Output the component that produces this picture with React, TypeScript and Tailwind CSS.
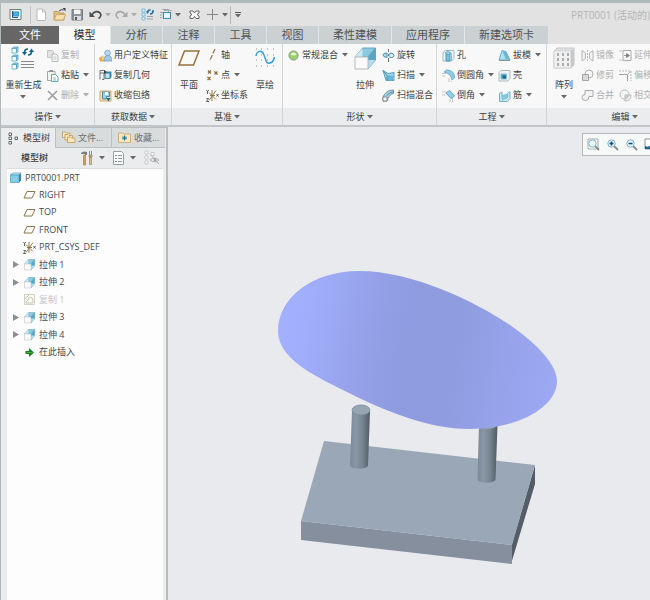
import React, { useState } from "react";

type IconProps = { children: React.ReactNode; w?: number; h?: number };

const Icon = ({ children, w = 13, h = 13 }: IconProps) => (
  <svg width={w} height={h} viewBox={`0 0 ${w} ${h}`} className="shrink-0" fill="none" aria-hidden="true">
    {children}
  </svg>
);

const Caret = ({ faded = false }: { faded?: boolean }) => (
  <svg width="6" height="4" viewBox="0 0 6 4" className="shrink-0" aria-hidden="true">
    <path d="M0 0h6L3 3.5z" fill={faded ? "#aaadaf" : "#66696b"} />
  </svg>
);

// ---- quick access icons ----

const AppIcon = () => (
  <Icon>
    <path d="M1 1.500h11v10H1z" fill="#f3f5f6" stroke="#717c82" />
    <path d="M4 3.500h6v5H4z" fill="#2b95cf" />
    <path d="M5 4.500h4v3H5z" fill="#4fb0e2" />
    <path d="M3.500 3v6.500H9" stroke="#2d586e" />
  </Icon>
);

const NewIcon = () => (
  <Icon>
    <path d="M2 1h5.500l3 3v8.500H2z" fill="#fff" stroke="#b6babc" />
    <path d="M7.500 1v3h3" stroke="#b6babc" />
  </Icon>
);

const OpenIcon = () => (
  <Icon>
    <path d="M1 3.500h4l1 1.500h5v7H1z" fill="#e3bd80" stroke="#c39a5f" />
    <path d="M3.500 6.500h9L10.500 12H1z" fill="#f8dfad" stroke="#cba869" />
    <path d="M6 3q2-2 4.500-1" stroke="#3c4347" />
    <path d="M9.500 0h3v3.500z" fill="#3c4347" />
  </Icon>
);

const SaveIcon = () => (
  <Icon>
    <path d="M1 1.500h10.500v10.500H1z" fill="#8d959a" stroke="#757c81" />
    <path d="M3 1.500h6.500v4.500H3z" fill="#f2f4f5" />
    <path d="M3 8h7v4H3z" fill="#d8dcdf" />
    <path d="M4 9h2v3H4z" fill="#575e63" />
  </Icon>
);

const UndoIcon = () => (
  <Icon>
    <path d="M3 7C4 4 8 2.500 10.500 4.500s1 5-1 6" stroke="#4a4f52" strokeWidth="1.700" />
    <path d="M.5 3.500V9H6z" fill="#4a4f52" />
  </Icon>
);

const RedoIcon = () => (
  <Icon>
    <path d="M10 7C9 4 5 2.500 2.500 4.500s-1 5 1 6" stroke="#a6a9ab" strokeWidth="1.700" />
    <path d="M12.500 3.500V9H7z" fill="#a6a9ab" />
  </Icon>
);

const SmallRegenIcon = () => (
  <Icon>
    <path d="M1 1h3v3H1zM1 5h3v3H1zM1 9h3v3H1z" fill="#d9eff8" stroke="#6db3cf" strokeWidth=".8" />
    <path d="M6.500 4.500Q7 1.500 9.500 2M12 3q0 3-3 3" stroke="#1b6f9c" strokeWidth="1.400" />
    <path d="M5 3.500h3L6.500 6zM10.500 4h3L12 1.500z" fill="#1b6f9c" />
    <path d="M6 8.500h6M6 11h6" stroke="#9ca1a4" />
  </Icon>
);

const WindowsIcon = () => (
  <Icon>
    <path d="M3.500 1.500h6v3M1 4.500h5M1 7h2M1 9.500h2" stroke="#9ca1a4" />
    <path d="M4.500 4.500h7v6h-7z" fill="#eaf6fb" stroke="#3f8fb4" strokeWidth="1.200" />
    <path d="M5 2.500h8" stroke="#aab0b3" />
  </Icon>
);

const CloseIcon = () => (
  <Icon>
    <path
      d="M2 3h3l1.500 2L8 3h3v2L9 6.500 11 8v2.500H8L6.500 8.500 5 10.500H2V8l2-1.500L2 5z"
      fill="#f7f7f7"
      stroke="#63686b"
    />
  </Icon>
);

const PlusIcon = () => (
  <Icon>
    <path d="M6.500 1v11M1 6.500h11" stroke="#84898c" />
  </Icon>
);

// ---- ribbon icons ----

const RegenIcon = () => (
  <Icon w={24} h={26}>
    {[2, 10, 18].map((y) => (
      <g key={y} stroke="#5ba6c4" strokeWidth=".8">
        <path d={`M1 ${y + 1.5}h4.500v4.500h-4.500z`} fill="#f6fcfe" />
        <path d={`M1 ${y + 1.5}l1.500-1.500h4.500l-1.500 1.500zM5.500 ${y + 1.5}L7 ${y}v4.500l-1.500 1.500z`} fill="#8fcbe2" />
      </g>
    ))}
    <path d="M13.500 7.500Q13.500 4 17 4M20.500 6.500Q20.500 10 17 10" stroke="#176389" strokeWidth="1.700" />
    <path d="M11 7h5l-2.500 3.500zM18 7h5l-2.500-3.500z" fill="#176389" />
    <path d="M10 16.500h13M10 19.500h13M10 22.500h13" stroke="#85898c" />
  </Icon>
);

const CopyIcon = () => (
  <Icon>
    <path d="M1.500 1.500h5l1 1v6h-6z" fill="#e4e4e4" stroke="#c3c5c6" />
    <path d="M6 5h4l2 2v5.500H6z" fill="#f7f7f7" stroke="#b7b9ba" />
    <path d="M7.500 8h3M7.500 10h3" stroke="#c4c6c7" />
  </Icon>
);

const PasteIcon = () => (
  <Icon>
    <path d="M1.500 2.500h7.500v9H1.500z" fill="#f1f3f4" stroke="#a0a5a8" />
    <path d="M3.500 1h3.500v2H3.500z" fill="#8b9194" />
    <path d="M5.500 5.500h4l2.500 2.500v4.500H5.500z" fill="#fff" stroke="#6ca5bd" />
    <path d="M7 9h3M7 11h3" stroke="#8ab4c6" />
  </Icon>
);

const DeleteIcon = () => (
  <Icon>
    <path d="M2 2l9 9M11 2l-9 9" stroke="#9a9c9e" strokeWidth="1.500" />
  </Icon>
);

const UserFeatureIcon = () => (
  <Icon>
    <path d="M0 9l3-2 3 2v3.500H1z" fill="#e9a94c" />
    <path d="M3 6l4 2v4l-4-1.500z" fill="#f6d291" />
    <path d="M5 12q0-5.500 4-5.500t4 5.500z" fill="#a5cbea" stroke="#6896bb" strokeWidth=".7" />
    <circle cx="8.500" cy="4" r="2.800" fill="#b8d7ee" stroke="#6896bb" strokeWidth=".7" />
  </Icon>
);

const CopyGeomIcon = () => (
  <Icon>
    <path d="M1 1.500h5M1 1.500v9M1 4h4v6.500H3" stroke="#6f7679" />
    <path d="M6 4l1.500-1.500h5V8L11 9.500H6z" fill="#3590b7" />
    <path d="M6 4h5v5.500H6z" fill="#bfe3f1" stroke="#2c6c8b" strokeWidth=".8" />
    <path d="M5 1l3 2-3 2z" fill="#383d3f" />
  </Icon>
);

const ShrinkIcon = () => (
  <Icon>
    <path d="M1 2h11v10H1z" fill="#f6e5b9" stroke="#cfab62" />
    <path d="M3.500 3v7h4V7.500h3V3z" fill="#9cd2ea" stroke="#3f8fb4" />
    <path d="M6 3v3h3V3z" fill="#fff" />
    <path d="M7.500 9h4l-2 3.500z" fill="#1e6487" />
  </Icon>
);

const PlaneIcon = () => (
  <Icon w={24} h={26}>
    <path d="M7.500 6h14.500l-5.500 14H2z" fill="#fbf9f5" stroke="#93743f" strokeWidth="1.500" />
  </Icon>
);

const AxisIcon = () => (
  <Icon>
    <path d="M9 0L3.500 12" stroke="#9b7a45" strokeWidth="1.300" strokeDasharray="5 1.500" />
  </Icon>
);

const PointIcon = () => (
  <Icon>
    <path d="M2 1.500l3 3M5 1.500l-3 3M8.500 2.500l3 3M11.500 2.500l-3 3M1.500 8l3 3M4.500 8l-3 3" stroke="#8a6b35" strokeWidth="1.200" />
  </Icon>
);

const CsysIcon = () => (
  <Icon>
    <path d="M6 1v11M3 3.500l7 7M10 1.500l-7 10M4 6.500h5" stroke="#8c6c36" strokeWidth=".9" />
    <path d="M.5 1l1 1.500L3 1M1.500 2.500V5M.5 9.500h2L.5 12.500h2.500M10.500 5l2 2.500M12.500 5l-2 2.500" stroke="#393b3d" strokeWidth=".8" />
  </Icon>
);

const SketchIcon = () => (
  <Icon w={24} h={26}>
    {[4, 10, 15, 21].map((y) => (
      <path key={y} d={`M3 ${y}h1M8 ${y}h1M14 ${y}h1M20 ${y}h1`} stroke="#85898c" />
    ))}
    <path d="M3 11C4 5 9 5 11 10s2 9 6 8 3.500-3 4.500-6" stroke="#34a0d8" strokeWidth="1.500" />
  </Icon>
);

const BlendIcon = () => (
  <Icon>
    <circle cx="6.500" cy="6.500" r="4.600" fill="#9bcf74" stroke="#87a572" />
    <path d="M3.500 5.500q3-4 6 0-3 2-6 0z" fill="#e5f7d6" />
  </Icon>
);

const ExtrudeIcon = ({ size = 24 }: { size?: number }) => (
  <svg width={size} height={size === 24 ? 26 : size} viewBox="0 0 24 26" className="shrink-0" fill="none" aria-hidden="true">
    <path d="M2 12L9.500 3h13L15 12z" fill="#8dc9df" stroke="#62a7c1" />
    <path d="M2 12L9.500 3v9z" fill="#c9e9f4" />
    <path d="M15 12l7.500-9v12L15 24z" fill="#57a5c5" stroke="#62a7c1" />
    <path d="M15 24l7.500-9H15z" fill="#b5dcea" />
    <path d="M2 12h13v12H2z" fill="#fafafa" stroke="#b4b8ba" />
  </svg>
);

const RevolveIcon = () => (
  <Icon>
    <path d="M6.500 0v3M6.500 5v2M6.500 9v4" stroke="#6b7275" />
    <path d="M5 4Q1 4 1 6t4 2.500zM8 4q4 0 4 2.500T8 8.500z" fill="#b3dceb" stroke="#4890ae" />
    <circle cx="9.500" cy="6.500" r="1.500" fill="#e7f6fb" />
  </Icon>
);

const SweepIcon = () => (
  <Icon>
    <path d="M1 1.500l5 3 6-1v8H4z" fill="#a3d5e8" stroke="#5aa2bd" />
    <path d="M5 6.500h6v5H5z" fill="#69b7d4" />
    <path d="M1 1.500l4 5v5" stroke="#4c90ac" />
  </Icon>
);

const SweepBlendIcon = () => (
  <Icon>
    <path d="M1 8Q4 1 11.500 1v3.500Q7 5 5 12H1z" fill="#a9d6e7" stroke="#70909c" />
    <path d="M1 8h4v4H1z" fill="#f5f8f9" stroke="#808e94" />
    <path d="M4.500 7Q7 3 11 3" stroke="#4b8ea9" />
  </Icon>
);

const HoleIcon = () => (
  <Icon>
    <path d="M1 3.500L3.500 1.500H12v8l-2.500 2.500H1z" fill="#edf6fa" stroke="#9abccb" />
    <path d="M4 4.500h4V12H4z" fill="#7cc1db" stroke="#479ab9" />
    <ellipse cx="6" cy="4" rx="2.500" ry="1.200" fill="#d3eef8" stroke="#479ab9" />
    <path d="M9.500 4v8" stroke="#a3b6be" />
  </Icon>
);

const RoundIcon = () => (
  <Icon>
    <path d="M2 3l2.500-2q8 0 8 8L10 11Q9 4.500 2 3z" fill="#93cde3" stroke="#6eafc9" />
    <path d="M0 4.500h4M0 7h3M7 9v4M9.500 12v1" stroke="#c1c6c8" />
  </Icon>
);

const ChamferIcon = () => (
  <Icon>
    <path d="M4 4L7.500 1.500l5 5.500L9 9.500z" fill="#93cfe6" stroke="#5faac7" />
    <path d="M0 3h4M0 6h3M8 10v3M10.500 9v4" stroke="#c1c6c8" />
  </Icon>
);

const DraftIcon = () => (
  <Icon>
    <path d="M1 11L4 1.500l4 1 4 8.500z" fill="#ace0f1" stroke="#6bb0ca" />
    <path d="M4.500 2L8 10.500h3.500L8 3z" fill="#6ab6d3" />
    <path d="M1 11.500h11" stroke="#8a959b" />
  </Icon>
);

const ShellIcon = () => (
  <Icon>
    <path d="M1 3.500L3 1.500h9v8l-2 2.500H1z" fill="#edf2f4" stroke="#b0babe" />
    <path d="M3 5h5.500v5H3z" fill="#3e9dc2" stroke="#84bdd3" />
    <path d="M5 6.500h3V9.500H5z" fill="#1c6b8d" />
  </Icon>
);

const RibIcon = () => (
  <Icon>
    <path d="M1.500 4.500v8h8l2.500-3v-7l-2.500 2v4L4 10V3z" fill="#c4e7f3" stroke="#76b1c8" />
    <path d="M4 6l5.500-1.500v4L4 12z" fill="#83c6de" />
  </Icon>
);

const PatternIcon = () => (
  <Icon w={24} h={26}>
    <path d="M2 6l3-3h17v17l-3 3H2z" fill="#dedfe0" stroke="#c8cacb" />
    <path d="M2 6h17v17H2z" fill="#f0f0f0" stroke="#d2d4d5" />
    <path d="M19 6l3-3v17l-3 3z" fill="#c6c8c9" />
    {[8, 13, 18].map((y) => (
      <path key={y} d={`M5 ${y}h2v3H5zM10 ${y}h2v3h-2zM15 ${y}h2v3h-2z`} fill="#abaeb0" />
    ))}
  </Icon>
);

const MirrorIcon = () => (
  <Icon>
    <path d="M1 1.500l3.500 2.500v5.500L1 12zM12 1.500L8.500 4v5.500L12 12z" fill="#f2f2f2" stroke="#b5b8b9" />
    <path d="M6.500 1v11" stroke="#b5b8b9" strokeDasharray="2 1" />
  </Icon>
);

const TrimIcon = () => (
  <Icon>
    <circle cx="8" cy="5" r="4" stroke="#a9acae" />
    <path d="M1.500 5.500h6v6h-6z" fill="#d9dadb" stroke="#a0a3a5" />
  </Icon>
);

const MergeIcon = () => (
  <Icon>
    <path d="M4 5.500V1.500h8v6H8q0 4-3.500 4T1 8.500t3-3z" fill="#f2f2f2" stroke="#a9acae" />
  </Icon>
);

const ExtendIcon = () => (
  <Icon>
    <path d="M4 1.500h8v10H4z" fill="#f6f6f6" stroke="#a9acae" />
    <path d="M0 2h3M0 11h3" stroke="#c1c3c4" />
    <path d="M5 6.500h3M7.500 4.500v4l3-2z" stroke="#7b7e80" fill="#7b7e80" strokeWidth=".8" />
  </Icon>
);

const OffsetIcon = () => (
  <Icon>
    <path d="M0 2h12v10" stroke="#b9bbbc" strokeDasharray="2 1" />
    <path d="M0 5.500h8.500V12" stroke="#9b9ea0" />
    <path d="M8.500 5.500L11.500 2.500" stroke="#aaa" />
  </Icon>
);

const IntersectIcon = () => (
  <Icon>
    <circle cx="5.500" cy="5.500" r="4.500" stroke="#b5b8b9" />
    <path d="M6 12V6h6q0 6-6 6z" stroke="#b5b8b9" fill="#f2f2f2" />
    <path d="M6 10V6h4q0 4-4 4z" fill="#c3c5c6" />
  </Icon>
);

// ---- navigator icons ----

const TreeTabIcon = () => (
  <Icon>
    <path d="M1 1h2.500v2.500H1zM1 5h2.500v2.500H1zM1 9.500h2.500V12H1zM7 5h2.500v2.500H7z" fill="#fff" stroke="#55595b" strokeWidth=".9" />
  </Icon>
);

const FoldersIcon = () => (
  <Icon w={14}>
    {[0, 2.5, 5].map((d) => (
      <path key={d} d={`M${d + 0.5} ${d + 1}h3l1 1h3.500v4.500h-7.500z`} fill="#fae7bd" stroke="#c09f62" strokeWidth=".9" />
    ))}
  </Icon>
);

const FavoriteIcon = () => (
  <Icon>
    <path d="M.5 2h4l1 1h7v8.500H.5z" fill="#fae7bd" stroke="#cfb079" />
    <path d="M6.500 4.500v5M4 7h5M5 5.500l3 3M8 5.500l-3 3" stroke="#1c7198" />
  </Icon>
);

const ToolsIcon = () => (
  <Icon w={14} h={16}>
    <path d="M1 3q2-2.500 6-1v3H5V4H1z" fill="#777d81" />
    <path d="M3.500 5h2v10h-2z" fill="#c99a52" stroke="#a1804f" strokeWidth=".6" />
    <path d="M9.500 1v4M11.500 1v4" stroke="#8a9195" />
    <path d="M9 5h3v2H9zM9.500 7h2v7.500h-2z" fill="#d2bd98" stroke="#8b7859" strokeWidth=".6" />
  </Icon>
);

const ListIcon = () => (
  <Icon h={16}>
    <path d="M1.500 1.500h8l2 2v11h-10z" fill="#fff" stroke="#999ea1" />
    <path d="M3 5.500h2M3 8.500h2M3 11.500h2M6 5.500h4M6 8.500h4M6 11.500h4" stroke="#8494a3" />
  </Icon>
);

const FilterIcon = () => (
  <Icon w={16} h={16}>
    <path d="M1 1h3v3H1zM1 6h3v3H1zM1 11h3v3H1zM7 2.500h3v3H7z" fill="#fafafa" stroke="#c8cbcc" />
    <path d="M6 10q4-4 9 0-4 4-9 0zM7 5l8 9" stroke="#b0b3b5" />
    <circle cx="11" cy="10" r="1.500" fill="#a1a4a6" />
  </Icon>
);

const PartIcon = () => (
  <Icon>
    <path d="M1.500 4L4 2h8l-2 2z" fill="#d9f2fb" stroke="#5a9dba" strokeWidth=".8" />
    <path d="M1.500 4h8.500v7.500H1.500z" fill="#86cde8" stroke="#4fa3c5" strokeWidth=".8" />
    <path d="M10 4l2-2v7.500l-2 2z" fill="#3287ab" />
  </Icon>
);

const DatumIcon = () => (
  <Icon>
    <path d="M4 3.500h8L9 10H1z" fill="#fffdf9" stroke="#8b764f" />
  </Icon>
);

const CopiedIcon = () => (
  <Icon>
    <path d="M1.500 1.500h10v10h-10z" stroke="#d3d0c3" fill="#fbfbf8" />
    <path d="M3 10q0-2 2-2.500 0-3 2.500-3t2.500 3V10zM2 6l4-4" stroke="#c4c1b3" />
  </Icon>
);

const InsertIcon = () => (
  <Icon>
    <path d="M2.500 5H6V2l5 4.500-5 4.500V8H2.500z" fill="#168021" />
    <path d="M3.500 6.500h6" stroke="#48b13d" />
  </Icon>
);

const ZoomIcon = ({ kind }: { kind: "fit" | "in" | "out" }) => (
  <Icon>
    {kind === "fit" && <path d="M1 1h10v10H1z" fill="#fff" stroke="#a5aaad" />}
    <path d="M8 8l4 4" stroke="#85898c" strokeWidth="1.800" />
    <circle cx="5.500" cy="5.500" r="3.700" fill="#e9f6fb" stroke="#83b3c8" />
    {kind === "in" && <path d="M3.500 5.500h4M5.500 3.500v4" stroke="#0f5377" strokeWidth="1.600" />}
    {kind === "out" && <path d="M3.500 5.500h4" stroke="#0f5377" strokeWidth="1.600" />}
  </Icon>
);

// ---- ribbon building blocks ----

type CommandProps = { icon: React.ReactNode; label: string; caret?: boolean; disabled?: boolean };

const Command = ({ icon, label, caret, disabled }: CommandProps) => (
  <button
    type="button"
    disabled={disabled}
    className="flex h-5 items-center gap-[2px] whitespace-nowrap text-[#3c3f41] disabled:text-[#adafb1]"
  >
    {icon}
    <span>{label}</span>
    {caret && (
      <span className="pl-[2px]">
        <Caret faded={disabled} />
      </span>
    )}
  </button>
);

const BigCommand = ({ icon, label, caret }: CommandProps) => (
  <button type="button" className="flex flex-col items-center whitespace-nowrap text-[#3c3f41]">
    {icon}
    <span className="flex h-6 items-center pt-[3px]">{label}</span>
    {caret && <Caret />}
  </button>
);

const Column = ({ children }: { children: React.ReactNode }) => (
  <div className="flex flex-col items-start">{children}</div>
);

const Group = ({ title, width, children }: { title: string; width: string; children: React.ReactNode }) => (
  <section className={`flex shrink-0 flex-col border-r border-[#d3d6d8] ${width}`}>
    <div className="flex h-16 pt-px">{children}</div>
    <button type="button" className="flex h-[17px] items-center justify-center gap-[2px] bg-[#eaecee] text-[#3c3f41]">
      {title}
      <Caret />
    </button>
  </section>
);

const tabs = [
  { label: "模型", width: "w-[52px]" },
  { label: "分析", width: "w-[52px]" },
  { label: "注释", width: "w-[52px]" },
  { label: "工具", width: "w-[52px]" },
  { label: "视图", width: "w-[52px]" },
  { label: "柔性建模", width: "w-[73px]" },
  { label: "应用程序", width: "w-[73px]" },
  { label: "新建选项卡", width: "w-[84px]" },
];

const treeItems = [
  { label: "RIGHT", icon: <DatumIcon /> },
  { label: "TOP", icon: <DatumIcon /> },
  { label: "FRONT", icon: <DatumIcon /> },
  { label: "PRT_CSYS_DEF", icon: <CsysIcon /> },
  { label: "拉伸 1", icon: <ExtrudeIcon size={13} />, expandable: true },
  { label: "拉伸 2", icon: <ExtrudeIcon size={13} />, expandable: true },
  { label: "复制 1", icon: <CopiedIcon />, faded: true },
  { label: "拉伸 3", icon: <ExtrudeIcon size={13} />, expandable: true },
  { label: "拉伸 4", icon: <ExtrudeIcon size={13} />, expandable: true },
  { label: "在此插入", icon: <InsertIcon /> },
];

const QuickButton = ({ label, children }: { label: string; children: React.ReactNode }) => (
  <button type="button" aria-label={label} className="flex w-[18px] justify-center">
    {children}
  </button>
);

const QuickCaret = ({ faded }: { faded?: boolean }) => (
  <button type="button" aria-label="更多" className="flex w-2 justify-center">
    <Caret faded={faded} />
  </button>
);

function QuickAccess() {
  return (
    <header className="flex h-[23px] shrink-0 items-center overflow-hidden bg-[#e2e2e2]">
      <button type="button" aria-label="应用程序菜单" className="flex w-[29px] shrink-0 justify-center">
        <AppIcon />
      </button>
      <span className="mr-px h-[18px] w-px bg-[#c3c5c6]" />
      <QuickButton label="新建"><NewIcon /></QuickButton>
      <QuickButton label="打开"><OpenIcon /></QuickButton>
      <QuickButton label="保存"><SaveIcon /></QuickButton>
      <QuickButton label="撤消"><UndoIcon /></QuickButton>
      <QuickCaret faded />
      <QuickButton label="重做"><RedoIcon /></QuickButton>
      <QuickCaret faded />
      <QuickButton label="重新生成"><SmallRegenIcon /></QuickButton>
      <QuickButton label="窗口"><WindowsIcon /></QuickButton>
      <QuickCaret />
      <span className="w-[3px]" />
      <QuickButton label="关闭"><CloseIcon /></QuickButton>
      <QuickButton label="添加"><PlusIcon /></QuickButton>
      <QuickCaret />
      <span className="mx-px h-[18px] w-px bg-[#b5b8b9]" />
      <button type="button" aria-label="自定义" className="flex w-3 flex-col items-center gap-px">
        <span className="h-px w-[6px] bg-[#55585a]" />
        <Caret />
      </button>
      <h1 className="ml-auto shrink-0 whitespace-nowrap text-[10px] text-[#b3b5b7]">PRT0001 (活动的)</h1>
    </header>
  );
}

function Ribbon() {
  return (
    <div className="flex h-[83px] shrink-0 overflow-hidden border-b-2 border-[#c2c6c9] bg-[#f8f8f8]">
      <Group title="操作" width="w-[94px]">
        <div className="flex w-[45px] justify-center">
          <BigCommand icon={<RegenIcon />} label="重新生成" caret />
        </div>
        <Column>
          <Command icon={<CopyIcon />} label="复制" disabled />
          <Command icon={<PasteIcon />} label="粘贴" caret />
          <Command icon={<DeleteIcon />} label="删除" caret disabled />
        </Column>
      </Group>
      <Group title="获取数据" width="w-[77px]">
        <div className="pl-1">
          <Column>
            <Command icon={<UserFeatureIcon />} label="用户定义特征" />
            <Command icon={<CopyGeomIcon />} label="复制几何" />
            <Command icon={<ShrinkIcon />} label="收缩包络" />
          </Column>
        </div>
      </Group>
      <Group title="基准" width="w-[111px]">
        <div className="flex w-[34px] justify-center">
          <BigCommand icon={<PlaneIcon />} label="平面" />
        </div>
        <Column>
          <Command icon={<AxisIcon />} label="轴" />
          <Command icon={<PointIcon />} label="点" caret />
          <Command icon={<CsysIcon />} label="坐标系" />
        </Column>
        <div className="flex flex-1 justify-center">
          <BigCommand icon={<SketchIcon />} label="草绘" />
        </div>
      </Group>
      <Group title="形状" width="w-[154px]">
        <div className="w-[65px] pl-1">
          <Column>
            <Command icon={<BlendIcon />} label="常规混合" caret />
          </Column>
        </div>
        <div className="flex w-[34px] justify-center">
          <BigCommand icon={<ExtrudeIcon />} label="拉伸" />
        </div>
        <Column>
          <Command icon={<RevolveIcon />} label="旋转" />
          <Command icon={<SweepIcon />} label="扫描" caret />
          <Command icon={<SweepBlendIcon />} label="扫描混合" />
        </Column>
      </Group>
      <Group title="工程" width="w-[110px]">
        <div className="w-[61px] pl-[5px]">
          <Column>
            <Command icon={<HoleIcon />} label="孔" />
            <Command icon={<RoundIcon />} label="倒圆角" caret />
            <Command icon={<ChamferIcon />} label="倒角" caret />
          </Column>
        </div>
        <Column>
          <Command icon={<DraftIcon />} label="拔模" caret />
          <Command icon={<ShellIcon />} label="壳" />
          <Command icon={<RibIcon />} label="筋" caret />
        </Column>
      </Group>
      <Group title="编辑" width="w-[156px]">
        <div className="flex w-[34px] justify-center">
          <BigCommand icon={<PatternIcon />} label="阵列" caret />
        </div>
        <div className="w-[38px]">
          <Column>
            <Command icon={<MirrorIcon />} label="镜像" disabled />
            <Command icon={<TrimIcon />} label="修剪" disabled />
            <Command icon={<MergeIcon />} label="合并" disabled />
          </Column>
        </div>
        <Column>
          <Command icon={<ExtendIcon />} label="延伸" disabled />
          <Command icon={<OffsetIcon />} label="偏移" disabled />
          <Command icon={<IntersectIcon />} label="相交" disabled />
        </Column>
      </Group>
    </div>
  );
}

function Navigator() {
  return (
    <aside className="flex w-[167px] shrink-0 flex-col border-r-2 border-[#b9bdc0] bg-[#eaecee] text-[#3c3f41]">
      <nav className="flex h-[21px] shrink-0 border-t border-[#b9bdc0] pr-px">
        <button type="button" className="flex w-[54px] items-center gap-[2px] pl-[7px]">
          <TreeTabIcon />
          模型树
        </button>
        <button type="button" className="flex w-[56px] items-center gap-[2px] border-b border-l border-[#bcc0c2] bg-[#d8dcdd] pl-[6px] text-[#6b6f71]">
          <FoldersIcon />
          文件...
        </button>
        <button type="button" className="flex flex-1 items-center gap-[3px] border-b border-l border-[#bcc0c2] bg-[#d8dcdd] pl-[6px] text-[#6b6f71]">
          <FavoriteIcon />
          收藏...
        </button>
      </nav>
      <div className="flex h-5 shrink-0 items-center pl-5">
        <h2 className="w-[59px] font-medium">模型树</h2>
        <button type="button" aria-label="设置" className="flex items-center gap-[5px]">
          <ToolsIcon />
          <Caret />
        </button>
        <button type="button" aria-label="显示" className="flex items-center gap-[5px] pl-[7px]">
          <ListIcon />
          <Caret />
        </button>
        <button type="button" aria-label="过滤" disabled className="pl-2">
          <FilterIcon />
        </button>
      </div>
      <ul className="mr-[3px] ml-[6px] flex-1 border-t border-[#dcdfe1] bg-[#fdfdfd] text-[#45484a]">
        <li>
          <div className="flex h-[17px] items-center gap-[3px] pl-[2px]">
            <PartIcon />
            PRT0001.PRT
          </div>
          <ul className="grid h-[175px] auto-rows-fr">
            {treeItems.map((item) => (
              <li key={item.label} className={item.faded ? "flex items-center text-[#c5c6c7]" : "flex items-center"}>
                <span className="flex w-4 justify-center pl-[2px]">
                  {item.expandable && (
                    <svg width="6" height="7" viewBox="0 0 6 7" aria-hidden="true">
                      <path d="M0 0v7l6-3.500z" fill="#8c8f91" />
                    </svg>
                  )}
                </span>
                <span className="flex items-center gap-[3px]">
                  {item.icon}
                  {item.label}
                </span>
              </li>
            ))}
          </ul>
        </li>
      </ul>
    </aside>
  );
}

function Viewport() {
  return (
    <main className="relative min-w-0 flex-1 overflow-hidden bg-[#e8eaee]">
      <svg className="h-full w-full" viewBox="168 127 482 473" role="img" aria-label="PRT0001">
        <defs>
          <linearGradient id="shade" gradientUnits="userSpaceOnUse" x1="280" y1="325" x2="557" y2="372">
            <stop offset="0" stopColor="#a3b0ff" />
            <stop offset=".1" stopColor="#a0adfb" />
            <stop offset=".22" stopColor="#99a6f0" />
            <stop offset=".36" stopColor="#929fe5" />
            <stop offset=".48" stopColor="#8e9bdf" />
            <stop offset=".62" stopColor="#8f9cdf" />
            <stop offset=".8" stopColor="#96a2e9" />
            <stop offset="1" stopColor="#9ca8f3" />
          </linearGradient>
          <linearGradient id="post">
            <stop offset="0" stopColor="#7c8997" />
            <stop offset=".3" stopColor="#8997a6" />
            <stop offset=".65" stopColor="#768390" />
            <stop offset="1" stopColor="#4f5963" />
          </linearGradient>
        </defs>
        {/* base plate */}
        <path d="M535 465v19l-24 80 1-20z" fill="#545d67" />
        <path d="M301 521l211 24v19l-211-24z" fill="#858f9e" />
        <path d="M324 441l211 24-23 80-211-24z" fill="#9aa7b6" />
        {/* posts */}
        <path d="M352 411h18l-2 54c0 5-18 5-18 0z" fill="url(#post)" />
        <ellipse cx="361" cy="410" rx="9" ry="5" fill="#97a5b3" stroke="#7b8896" strokeWidth=".7" />
        <path d="M479 425h18.500l-2 54c0 5-18 5-18 0z" fill="url(#post)" />
        <ellipse cx="488" cy="424" rx="9.500" ry="5" fill="#97a5b3" />
        {/* oval surface */}
        <path
          d="M278 331C278 298 312 271 359 271C412 271 474 301 510 325C540 346 557 366 557 381C557 407 518 429 470 429C428 429 385 411 345 391C310 374 278 357 278 331Z"
          fill="url(#shade)"
        />
      </svg>
      <div className="absolute top-[6px] left-[414px] flex h-[23px] w-[180px] items-center gap-[6px] border border-[#b4b8bb] bg-[#f7f8f8] pl-1">
        <button type="button" aria-label="重新调整"><ZoomIcon kind="fit" /></button>
        <button type="button" aria-label="放大"><ZoomIcon kind="in" /></button>
        <button type="button" aria-label="缩小"><ZoomIcon kind="out" /></button>
        <button type="button" aria-label="重画">
          <Icon>
            <path d="M1 1h11v10H1z" fill="#fff" stroke="#8d9295" />
            <path d="M1 11V8q4 2 6-2l5 5z" fill="#1a668a" />
          </Icon>
        </button>
      </div>
    </main>
  );
}

export default function App() {
  const [active, setActive] = useState("模型");

  return (
    <div className="flex h-screen flex-col overflow-hidden border-t-[3px] border-l border-[#b1b9bd] bg-[#e2e2e2] font-['Open_Sans','Noto_Sans_CJK_SC',sans-serif] text-[9px] leading-3">
      <QuickAccess />
      <nav className="flex h-[18px] shrink-0 overflow-hidden text-[11px] leading-4">
        <button type="button" className="w-[58px] shrink-0 bg-[#666] text-white">文件</button>
        {tabs.map((tab) => (
          <button
            key={tab.label}
            type="button"
            onClick={() => setActive(tab.label)}
            className={`shrink-0 border-r border-[#e2e4e5] ${tab.width} ${
              active === tab.label ? "bg-[#f8f8f8] text-[#2e3133]" : "bg-[#cbd0d3] text-[#505456]"
            }`}
          >
            {tab.label}
          </button>
        ))}
      </nav>
      <Ribbon />
      <div className="flex min-h-0 flex-1">
        <Navigator />
        <Viewport />
      </div>
    </div>
  );
}
